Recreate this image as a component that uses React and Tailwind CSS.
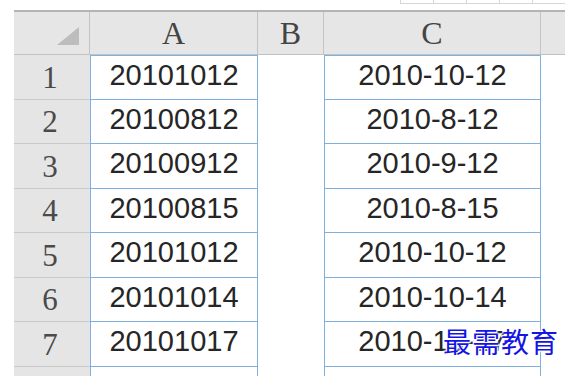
import React from "react";

const rows = [
  { n: "1", a: "20101012", c: "2010-10-12" },
  { n: "2", a: "20100812", c: "2010-8-12" },
  { n: "3", a: "20100912", c: "2010-9-12" },
  { n: "4", a: "20100815", c: "2010-8-15" },
  { n: "5", a: "20101012", c: "2010-10-12" },
  { n: "6", a: "20101014", c: "2010-10-14" },
  { n: "7", a: "20101017", c: "2010-10-17" },
];

const serif = { fontFamily: '"Liberation Serif", "DejaVu Serif", serif' };

function HeaderCell({ w, children }) {
  return (
    <div
      className={`${w} h-full flex items-center justify-center border-r border-[#c4c4c4] text-[32px] text-[#444] leading-none`}
      style={serif}
    >
      {children}
    </div>
  );
}

function Row({ r, i }) {
  const h = i % 2 === 0 ? "h-[45px]" : "h-[44px]";
  return (
    <div className={`flex ${h}`}>
      <div
        className="w-[76px] h-full flex items-center justify-center bg-[#e5e5e5] border-b border-[#c9c9c9] text-[31px] text-[#4a4a4a] leading-none pr-1"
        style={serif}
      >
        {r.n}
      </div>
      <div className={`w-[168px] h-full flex items-center justify-center border-x border-b border-[#7eb0e0] bg-white pb-1 ${i === 0 ? "border-t" : ""}`}>
        {r.a}
      </div>
      <div className="w-[66px] h-full bg-white" />
      <div className={`relative w-[217px] h-full flex items-center justify-center border-x border-b border-[#7eb0e0] bg-white pb-1 ${i === 0 ? "border-t" : ""}`}>
        {r.c}
      </div>
      <div className="flex-1 h-full bg-white" />
    </div>
  );
}

export default function App() {
  return (
    <div
      className="relative w-[565px] h-[376px] bg-white overflow-hidden text-[29px] text-[#262626]"
      style={{ fontFamily: '"Liberation Sans", Arial, sans-serif' }}
    >
      {/* top strip */}
      <div className="h-[10px] flex justify-end">
        <div className="flex h-[4px] border-b border-[#d6d6d6]">
          {[0, 1, 2, 3, 4].map((k) => (
            <div key={k} className="w-[33px] h-full border-l border-[#d6d6d6]" />
          ))}
        </div>
      </div>

      <div className="pl-[14px]">
        {/* column header */}
        <div className="flex h-[45px] bg-[#e6e6e6] border-t-2 border-[#b4b4b4] border-b border-b-[#c2c2c2]">
          <div className="w-[76px] h-full border-r border-[#c4c4c4] flex items-end justify-end pr-[10px] pb-[9px]">
            <div className="w-0 h-0 border-l-[22px] border-l-transparent border-b-[18px] border-b-[#bdbdbd]" />
          </div>
          <HeaderCell w="w-[168px]">A</HeaderCell>
          <HeaderCell w="w-[66px]">B</HeaderCell>
          <HeaderCell w="w-[217px]">C</HeaderCell>
          <div className="flex-1" />
        </div>

        {rows.map((r, i) => (
          <Row key={r.n} r={r} i={i} />
        ))}

        {/* partial row 8 */}
        <div className="flex h-[10px]">
          <div className="w-[76px] h-full bg-[#e5e5e5]" />
          <div className="w-[168px] h-full border-x border-[#7eb0e0]" />
          <div className="w-[66px]" />
          <div className="w-[217px] h-full border-x border-[#7eb0e0]" />
        </div>
      </div>

      {/* watermark */}
      <div
        className="absolute left-[443px] top-[327px] text-[28px] text-[#1414e6] leading-none tracking-[1px]"
        style={{
          fontFamily: '"Noto Sans CJK SC", sans-serif',
          textShadow: "0 0 2px #fff, 0 0 3px #fff, 1px 1px 0 #fff, -1px -1px 0 #fff",
        }}
      >
        最需教育
      </div>
    </div>
  );
}
